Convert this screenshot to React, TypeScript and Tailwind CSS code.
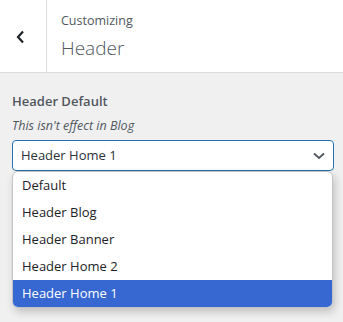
import React from "react";

export default function App() {
  const items = ["Default", "Header Blog", "Header Banner", "Header Home 2", "Header Home 1"];
  return (
    <div className="w-[343px] h-[322px] bg-[#f0f0f1] overflow-hidden" style={{ fontFamily: '"Open Sans", "Noto Sans", sans-serif' }}>
      <div className="h-[73px] bg-white border-b border-[#dcdcde] flex">
        <div className="w-[47px] border-r border-[#dcdcde] flex items-center justify-center">
          <svg width="12" height="14" viewBox="0 0 12 14" className="ml-[-4px] mt-[2px]">
            <path d="M8 1.5 L3 7 L8 12.5" fill="none" stroke="#1d2327" strokeWidth="2.2" />
          </svg>
        </div>
        <div className="pl-[14px] pt-[12px] flex flex-col">
          <span className="text-[12.5px] leading-[18px] text-[#50575e]">Customizing</span>
          <span className="text-[19px] leading-[26px] mt-[5px] text-[#50575e] font-light">Header</span>
        </div>
      </div>
      <div className="px-[12px] pt-[18px]">
        <div className="text-[13px] font-semibold text-[#50575e] leading-[20px]">Header Default</div>
        <div className="text-[12.5px] italic text-[#50575e] leading-[18px] mt-[6px]">This isn't effect in Blog</div>
        <div className="relative mt-[5px]">
          <div className="h-[31px] w-[322px] border border-[#2271b1] rounded-[4px] bg-white flex items-center justify-between pl-[8px] pr-[8px]">
            <span className="text-[13px] text-[#2c3338]">Header Home 1</span>
            <svg width="12" height="8" viewBox="0 0 12 8">
              <path d="M1 1.5 L6 6 L11 1.5" fill="none" stroke="#50575e" strokeWidth="1.8" />
            </svg>
          </div>
          <div className="absolute left-0 top-[31px] w-[321px] bg-white rounded-[6px] border border-[#c3c4c7] shadow-[2px_4px_8px_rgba(0,0,0,0.2)] overflow-hidden">
            {items.map((it, i) => (
              <div
                key={it}
                className={
                  "h-[27px] flex items-center pl-[9px] text-[13px] " +
                  (i === items.length - 1 ? "bg-[#3767d1] text-white" : "text-[#1d2327]")
                }
              >
                {it}
              </div>
            ))}
          </div>
        </div>
      </div>
    </div>
  );
}
